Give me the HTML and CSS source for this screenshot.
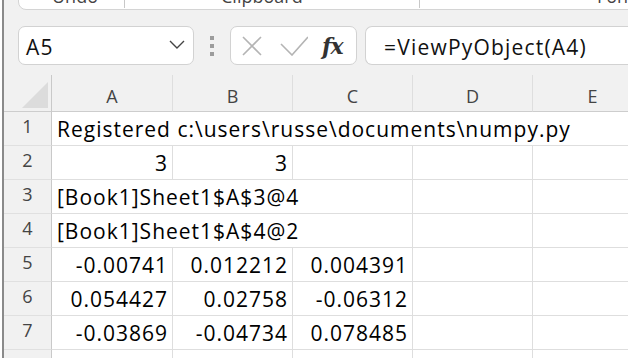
FILE: index.html
```html
<!DOCTYPE html>
<html lang="en">
<head>
  <meta charset="UTF-8">
  <title>Book1 - Excel</title>
  <link rel="stylesheet" href="styles.css">
</head>
<body>

  <div class="window">
    <div class="toolbar">
      <div class="ribbon">
        <div class="group undo"><span class="label">Undo</span></div>
        <span class="sep"></span>
        <div class="group clip">
          <span class="label">Clipboard</span>
          <svg class="launcher" width="8" height="8" viewBox="0 0 8 8"><path d="M1 1h6v6M2 6l5-5" fill="none" stroke="#444" stroke-width="1.4"/></svg>
        </div>
        <span class="sep"></span>
        <div class="group font"><span class="label">Font</span></div>
      </div>

      <div class="formula-row">
        <div class="namebox">
          <span>A5</span>
          <svg width="18" height="10" viewBox="0 0 18 10"><path d="M2 2l7 7 7-7" fill="none" stroke="#444" stroke-width="1.4"/></svg>
        </div>
        <div class="grip"><i></i><i></i><i></i></div>
        <div class="fxbox">
          <svg class="cancel" width="20" height="20" viewBox="0 0 20 20"><path d="M1 1l18 18M19 1L1 19" stroke="#b4b4b4" stroke-width="1.6"/></svg>
          <svg class="enter" width="28" height="20" viewBox="0 0 28 20"><path d="M1 8l11 11L28 1" fill="none" stroke="#b4b4b4" stroke-width="1.6"/></svg>
          <span class="fx">fx</span>
        </div>
        <div class="formula">=ViewPyObject(A4)</div>
      </div>
    </div>

    <div class="sheet">
      <div class="row head">
        <div class="corner"><span class="tri"></span></div>
        <div class="colhead">A</div>
        <div class="colhead">B</div>
        <div class="colhead">C</div>
        <div class="colhead">D</div>
        <div class="colhead">E</div>
      </div>
      <div class="row">
        <div class="rowhead">1</div>
        <div class="cell span-5">Registered c:\users\russe\documents\numpy.py</div>
      </div>
      <div class="row">
        <div class="rowhead">2</div>
        <div class="cell num">3</div>
        <div class="cell num">3</div>
        <div class="cell"></div>
        <div class="cell"></div>
        <div class="cell"></div>
      </div>
      <div class="row">
        <div class="rowhead">3</div>
        <div class="cell span-3">[Book1]Sheet1$A$3@4</div>
        <div class="cell"></div>
        <div class="cell"></div>
      </div>
      <div class="row">
        <div class="rowhead">4</div>
        <div class="cell span-3">[Book1]Sheet1$A$4@2</div>
        <div class="cell"></div>
        <div class="cell"></div>
      </div>
      <div class="row">
        <div class="rowhead">5</div>
        <div class="cell num">-0.00741</div>
        <div class="cell num">0.012212</div>
        <div class="cell num">0.004391</div>
        <div class="cell"></div>
        <div class="cell"></div>
      </div>
      <div class="row">
        <div class="rowhead">6</div>
        <div class="cell num">0.054427</div>
        <div class="cell num">0.02758</div>
        <div class="cell num">-0.06312</div>
        <div class="cell"></div>
        <div class="cell"></div>
      </div>
      <div class="row">
        <div class="rowhead">7</div>
        <div class="cell num">-0.03869</div>
        <div class="cell num">-0.04734</div>
        <div class="cell num">0.078485</div>
        <div class="cell"></div>
        <div class="cell"></div>
      </div>
      <div class="row">
        <div class="rowhead"></div>
        <div class="cell"></div>
        <div class="cell"></div>
        <div class="cell"></div>
        <div class="cell"></div>
        <div class="cell"></div>
      </div>
    </div>
  </div>

</body>
</html>
```

FILE: styles.css
```css
body {
  margin: 0;
  background-color: #fff;
  font-family: "Open Sans", sans-serif;
  width: 628px;
  height: 358px;
  overflow: hidden;
}
.window {
  margin-left: 2px;
  border-left: 2px solid #8a8a8a;
  height: 358px;
  overflow: hidden;
  background-color: #f1f1f1;
}
.toolbar {
  height: 75px;
  overflow: hidden;
}
.ribbon {
  display: flex;
  height: 32px;
  margin-top: -22px;
  margin-left: 14px;
  width: 700px;
  box-sizing: border-box;
  background-color: #fff;
  border: 1px solid #d4d4d4;
  border-radius: 8px;
  color: #444;
  font-size: 18px;
  line-height: 24px;
}
.group {
  display: flex;
  align-items: flex-start;
  padding-top: 5px;
  box-sizing: border-box;
}
.undo {
  width: 105px;
  padding-left: 33px;
}
.clip {
  width: 294px;
  padding-left: 96px;
}
.launcher {
  margin-left: 106px;
  margin-top: 9px;
}
.font {
  padding-left: 177px;
}
.sep {
  width: 1px;
  height: 8px;
  margin-top: 21px;
  background-color: #c8c8c8;
}
.formula-row {
  display: flex;
  align-items: center;
  height: 39px;
  margin-top: 16px;
  margin-left: 14px;
  font-size: 21px;
  letter-spacing: 1.2px;
  color: #111;
}
.namebox,
.fxbox,
.formula {
  height: 39px;
  box-sizing: border-box;
  background-color: #fff;
  border: 1px solid #d2d2d2;
  border-radius: 7px;
  display: flex;
  align-items: center;
}
.namebox {
  width: 176px;
  padding: 2px 0 0 7px;
  justify-content: space-between;
}
.namebox svg {
  margin-right: 7px;
  margin-top: -5px;
}
.grip {
  width: 36px;
  display: flex;
  flex-direction: column;
  align-items: center;
  gap: 4px;
}
.grip i {
  width: 4px;
  height: 4px;
  background-color: #9c9c9c;
}
.fxbox {
  width: 127px;
  padding-left: 11px;
}
.cancel {
  margin-top: 1px;
}
.enter {
  margin-left: 18px;
}
.fx {
  margin-left: 14px;
  font-family: "DejaVu Serif", serif;
  font-style: italic;
  font-weight: bold;
  font-size: 22px;
  color: #333;
  letter-spacing: -1px;
}
.formula {
  flex: 1;
  margin-left: 8px;
  padding: 2px 0 0 18px;
  border-right: none;
  border-radius: 7px 0 0 7px;
  white-space: nowrap;
}
.sheet {
  font-size: 21px;
}
.row {
  display: grid;
  grid-template-columns: 48px 121px 120px 120px 120px 120px;
  height: 34px;
}
.row.head {
  height: 37px;
}
.corner,
.colhead,
.rowhead {
  box-sizing: border-box;
  background-color: #f1f1f1;
  color: #444;
  font-size: 18px;
  line-height: 24px;
  text-align: center;
}
.corner {
  position: relative;
  border-right: 1px solid #c9c9c9;
  border-bottom: 1px solid #cdcdcd;
}
.tri {
  position: absolute;
  left: 18px;
  top: 7px;
  width: 26px;
  height: 26px;
  background-color: #dcdcdc;
  clip-path: polygon(100% 0, 100% 100%, 0 100%);
}
.colhead {
  padding-top: 9px;
  border-right: 1px solid #dedede;
  border-bottom: 1px solid #cdcdcd;
}
.rowhead {
  padding-top: 2px;
  border-right: 1px solid #c9c9c9;
  border-bottom: 1px solid #e0e0e0;
}
.cell {
  box-sizing: border-box;
  background-color: #fff;
  border-right: 1px solid #dedede;
  border-bottom: 1px solid #dedede;
  padding: 3px 4px 0 5px;
  line-height: 28px;
  letter-spacing: 1px;
  white-space: nowrap;
  color: #000;
}
.num {
  text-align: right;
}
.span-5 {
  grid-column: span 5;
}
.span-3 {
  grid-column: span 3;
}
```
